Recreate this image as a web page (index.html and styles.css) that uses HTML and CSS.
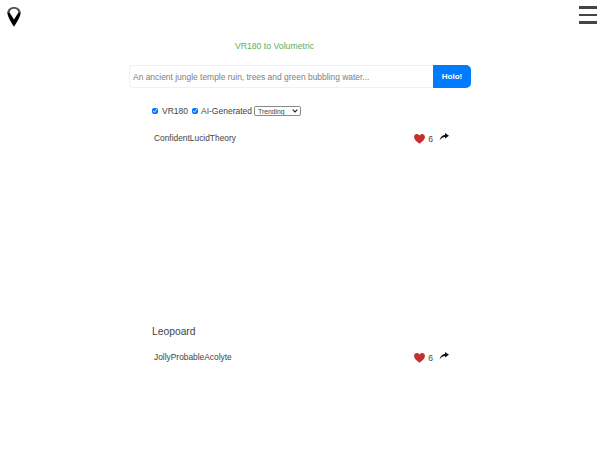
FILE: index.html
```html
<!DOCTYPE html>
<html lang="en">
<head>
    <meta charset="UTF-8">
    <meta name="viewport" content="width=device-width, initial-scale=1.0">
    <title>VR180 to Volumetric</title>
    <link rel="stylesheet" href="styles.css">
</head>
<body>
    <div class="topbar">
        <a class="logo" href="#">
            <svg width="14" height="20" viewBox="0 0 14 20">
                <path fill="#000" d="M.4 5 13.6 5C14 9 9.4 16 7 19.8 4.6 16 0 9 .4 5Z"/>
                <path fill="#555" d="M7 0C3.4 0 .4 2.2.4 5.4L3 6.2C3.2 3.8 4.8 2 7 2 9.2 2 10.8 3.8 11 6.2L13.6 5.4C13.6 2.2 10.6 0 7 0Z"/>
                <path fill="#fff" d="M7 1.8C4.8 1.8 2.8 3.2 2.8 5.2 2.8 6.2 3.4 6.8 4 7.8L7 12.5 10 7.8C10.6 6.8 11.2 6.2 11.2 5.2 11.2 3.2 9.2 1.8 7 1.8Z"/>
            </svg>
        </a>
        <div class="menu"><span></span><span></span><span></span></div>
    </div>

    <div class="main">
        <a class="tagline" href="#">VR180 to Volumetric</a>
        <form class="prompt">
            <input class="promptInput" type="text" placeholder="An ancient jungle temple ruin, trees and green bubbling water...">
            <button class="promptBtn" type="button">Holo!</button>
        </form>

        <div class="filters">
            <input type="checkbox" checked><label>VR180</label>
            <input type="checkbox" checked><label>AI-Generated</label>
            <select class="sort"><option>Trending</option></select>
        </div>

        <div class="post first">
            <div class="postRow">
                <span class="author">ConfidentLucidTheory</span>
                <div class="actions">
                    <svg class="heart" width="11" height="10" viewBox="0 0 12 11"><path fill="#c62f2f" d="M6 10.8C2.6 8.2 0 6 0 3.3 0 1.4 1.4 0 3.1 0 4.3 0 5.4.6 6 1.7 6.6.6 7.7 0 8.9 0 10.6 0 12 1.4 12 3.3 12 6 9.4 8.2 6 10.8Z"/></svg>
                    <span class="count">6</span>
                    <svg class="share" width="10" height="8" viewBox="0 0 10 8"><path fill="#111" d="M6 0 10 2.8 6 5.6V4C3.8 4 2 5.2.6 7.6 1 4.6 3 2.2 6 1.8Z"/></svg>
                </div>
            </div>
        </div>

        <div class="post second">
            <h2 class="postTitle">Leopoard</h2>
            <div class="postRow">
                <span class="author">JollyProbableAcolyte</span>
                <div class="actions">
                    <svg class="heart" width="11" height="10" viewBox="0 0 12 11"><path fill="#c62f2f" d="M6 10.8C2.6 8.2 0 6 0 3.3 0 1.4 1.4 0 3.1 0 4.3 0 5.4.6 6 1.7 6.6.6 7.7 0 8.9 0 10.6 0 12 1.4 12 3.3 12 6 9.4 8.2 6 10.8Z"/></svg>
                    <span class="count">6</span>
                    <svg class="share" width="10" height="8" viewBox="0 0 10 8"><path fill="#111" d="M6 0 10 2.8 6 5.6V4C3.8 4 2 5.2.6 7.6 1 4.6 3 2.2 6 1.8Z"/></svg>
                </div>
            </div>
        </div>
    </div>
</body>
</html>
```

FILE: styles.css
```css
body {
    margin: 0;
    height: 450px;
    overflow: hidden;
    background: #fff;
    color: #444;
    font-family: "Liberation Sans", Arial, sans-serif;
}

.topbar {
    display: flex;
    justify-content: space-between;
    align-items: flex-start;
    height: 40px;
    padding: 6px 3px 0 7px;
    box-sizing: border-box;
}

.logo {
    display: block;
    margin-top: 1px;
}

.menu {
    display: flex;
    flex-direction: column;
    gap: 5px;
}

.menu span {
    display: block;
    width: 18px;
    height: 2.5px;
    background: #444;
}

.main {
    width: 342px;
    margin-left: 129px;
}

.tagline {
    display: block;
    width: 291px;
    text-align: center;
    font-size: 8.7px;
    line-height: 12px;
    color: #5cae60;
    text-decoration: none;
}

.prompt {
    display: flex;
    height: 23px;
    margin-top: 13px;
}

.promptInput {
    flex: 1;
    min-width: 0;
    padding: 0 3px;
    font-family: inherit;
    font-size: 8.45px;
    color: #444;
    background: #fff;
    border: 1px solid #f0f0f0;
    border-right: none;
    border-radius: 4px 0 0 4px;
    outline: none;
}

.promptInput::placeholder {
    color: #808080;
}

.promptBtn {
    width: 38px;
    padding: 0;
    font-family: inherit;
    font-size: 8px;
    font-weight: bold;
    color: #fff;
    background: #007bff;
    border: none;
    border-radius: 0 5px 5px 0;
}

.filters {
    display: flex;
    align-items: center;
    height: 12px;
    margin: 17px 0 0 23px;
    font-size: 8.5px;
}

.filters input {
    width: 6px;
    height: 6px;
    margin: 0 4px 0 0;
}

.filters input:nth-of-type(2) {
    margin-right: 3px;
}

.filters label {
    margin-right: 4px;
}

.filters label:nth-of-type(2) {
    margin-right: 2px;
}

.sort {
    appearance: none;
    width: 47px;
    height: 10px;
    padding: 0 0 0 3px;
    font-family: inherit;
    font-size: 6.8px;
    color: #444;
    background: #fff url("data:image/svg+xml,%3Csvg xmlns='http://www.w3.org/2000/svg' width='6' height='4'%3E%3Cpath d='M.7.7 3 3 5.3.7' fill='none' stroke='%23222' stroke-width='1.2'/%3E%3C/svg%3E") no-repeat right 2px center;
    border: 1px solid #8a8a8a;
    border-radius: 2px;
}

.post {
    margin-left: 23px;
    width: 297px;
}

.post.first {
    margin-top: 15px;
}

.post.second {
    margin-top: 181px;
}

.postTitle {
    margin: 0 0 12px;
    font-size: 10.3px;
    line-height: 14px;
    font-weight: normal;
}

.postRow {
    display: flex;
    justify-content: space-between;
    align-items: center;
    height: 12px;
    padding-left: 2px;
}

.author {
    font-size: 8.4px;
}

.actions {
    display: flex;
    align-items: center;
}

.heart {
    margin-top: 1px;
}

.count {
    margin: 1px 6px 0 3px;
    font-size: 8.5px;
}

.share {
    margin-top: -2px;
}
```
